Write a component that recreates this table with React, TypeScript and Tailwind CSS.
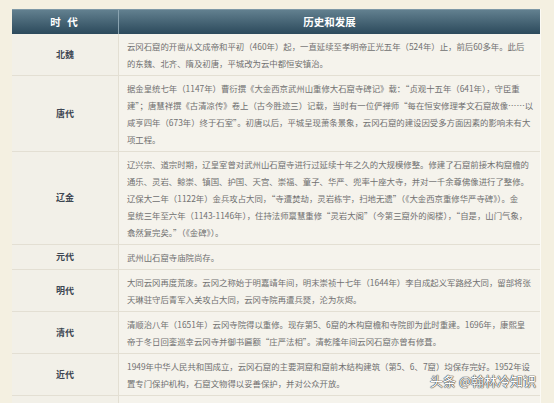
import React from 'react';

interface Row {
  era: string;
  lines: string[];
}

const rows: Row[] = [
  {
    era: '北魏',
    lines: [
      '云冈石窟的开凿从文成帝和平初（460年）起，一直延续至孝明帝正光五年（524年）止，前后60多年。此后',
      '的东魏、北齐、隋及初唐，平城改为云中都恒安镇治。',
    ],
  },
  {
    era: '唐代',
    lines: [
      '据金皇统七年（1147年）曹衍撰《大金西京武州山重修大石窟寺碑记》载：“贞观十五年（641年），守臣重',
      '建”；唐慧祥撰《古清凉传》卷上（古今胜迹三）记载，当时有一位俨禅师“每在恒安修理孝文石窟故像……以',
      '咸亨四年（673年）终于石室”。初唐以后，平城呈现萧条景象，云冈石窟的建设因受多方面因素的影响未有大',
      '项工程。',
    ],
  },
  {
    era: '辽金',
    lines: [
      '辽兴宗、道宗时期，辽皇室曾对武州山石窟寺进行过延续十年之久的大规模修整。修建了石窟前接木构窟檐的',
      '通乐、灵岩、鲸崇、镇国、护国、天宫、崇福、童子、华严、兜率十座大寺，并对一千余尊佛像进行了整修。',
      '辽保大二年（1122年）金兵攻占大同，“寺遭焚劫，灵岩栋宇，扫地无遗”（《大金西京重修华严寺碑》）。金',
      '皇统三年至六年（1143-1146年），住持法师禀慧重修“灵岩大阁”（今第三窟外的阁楼），“自是，山门气象，',
      '翕然复完矣。”（《金碑》）。',
    ],
  },
  {
    era: '元代',
    lines: ['武州山石窟寺庙院尚存。'],
  },
  {
    era: '明代',
    lines: [
      '大同云冈再度荒废。云冈之称始于明嘉靖年间，明末崇祯十七年（1644年）李自成起义军路经大同，留部将张',
      '天琳驻守后青军入关攻占大同，云冈寺院再遭兵燹，沦为灰烬。',
    ],
  },
  {
    era: '清代',
    lines: [
      '清顺治八年（1651年）云冈寺院得以重修。现存第5、6窟的木构窟檐和寺院即为此时重建。1696年，康熙皇',
      '帝于冬日回銮巡幸云冈寺并御书匾额“庄严法相”。清乾隆年间云冈石窟亦曾有修葺。',
    ],
  },
  {
    era: '近代',
    lines: [
      '1949年中华人民共和国成立，云冈石窟的主要洞窟和窟前木结构建筑（第5、6、7窟）均保存完好。1952年设',
      '置专门保护机构，石窟文物得以妥善保护，并对公众开放。',
    ],
  },
];

const App: React.FC = () => {
  return (
    <div
      className="relative w-[554px] h-[403px] overflow-hidden bg-[#f4f0e1] pt-[9px] pl-[12px]"
      style={{ fontFamily: '"Noto Sans CJK SC", "Noto Sans", sans-serif' }}
    >
      <div className="w-[529px] border-r border-[#fbfaf5]">
        {/* header */}
        <div className="grid grid-cols-[107px_1fr] h-[25px] bg-gradient-to-b from-[#62808f] to-[#2c4a5c] border-t border-[#7d98a6] text-white font-bold text-[10.5px]">
          <div className="flex items-center justify-center border-r border-[#8aa3b0] tracking-[2px]">时 代</div>
          <div className="flex items-center justify-center">历史和发展</div>
        </div>

        {rows.map((row) => (
          <div key={row.era} className="grid grid-cols-[107px_1fr] border-b border-[#e3dfd3] bg-[#f5f3ec]">
            <div className="flex items-center justify-center border-r border-[#e3dfd3] bg-[#f2f0e8] text-[9px] font-bold text-[#3d4652]">
              {row.era}
            </div>
            <div className="pl-[8px] pt-[4px] pb-[3px] text-[8.4px] leading-[17px] text-[#707070] whitespace-nowrap">
              {row.lines.map((line, i) => (
                <div key={i}>{line}</div>
              ))}
            </div>
          </div>
        ))}
        <div className="grid grid-cols-[107px_1fr] h-[20px] bg-[#f5f3ec]">
          <div className="border-r border-[#e3dfd3] bg-[#f2f0e8]" />
          <div />
        </div>
      </div>

      <div className="absolute left-[430px] top-[371px] text-[13px] leading-[20px] text-white [text-shadow:0_0_1px_#333,0_0_1px_#333,0_0_1px_#333]">
        头条 @翰林冷知识
      </div>
    </div>
  );
};

export default App;
